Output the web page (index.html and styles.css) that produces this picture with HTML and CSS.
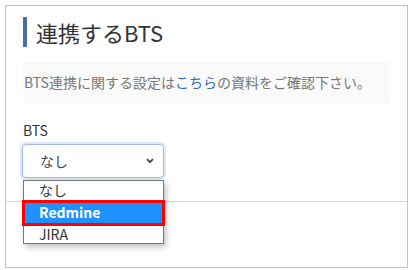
FILE: index.html
```html
<!DOCTYPE html>
<html lang="ja">
<head>
  <meta charset="UTF-8" />
  <meta name="viewport" content="width=device-width, initial-scale=1" />
  <title>連携するBTS</title>
  <link rel="stylesheet" href="styles.css">
</head>
<body>

  <div class="card">
    <div class="card-body">
      <h2 class="heading">連携するBTS</h2>

      <div class="info">BTS連携に関する設定は<a href="#">こちら</a>の資料をご確認下さい。</div>

      <label class="field-label" for="bts">BTS</label>
      <div class="select" id="bts">
        <span>なし</span>
        <svg class="chevron" width="8" height="6" viewBox="0 0 8 6">
          <path d="M1 1.2 L4 4.2 L7 1.2" fill="none" stroke="#444" stroke-width="1.8" />
        </svg>
      </div>
    </div>

    <!-- ドロップダウン展開中 -->
    <ul class="options">
      <li>なし</li>
      <li class="active">Redmine</li>
      <li>JIRA</li>
    </ul>
  </div>

</body>
</html>
```

FILE: styles.css
```css
body {
  margin: 0;
  background: #fff;
  font-family: "Noto Sans CJK JP", "Noto Sans", sans-serif;
  color: #333;
}

.card {
  position: relative;
  box-sizing: border-box;
  width: 403px;
  height: 263px;
  margin: 5px;
  border: 1px solid #c2c2c2;
}

.card-body {
  box-sizing: border-box;
  height: 196px;
  padding: 11px 17px 0;
  border-bottom: 1px solid #cfd8dc;
}

.heading {
  margin: 0;
  height: 30px;
  padding-left: 9px;
  border-left: 4px solid #4a6db0;
  font-size: 22px;
  font-weight: normal;
  line-height: 30px;
  color: #333;
}

.info {
  margin-top: 15px;
  height: 41px;
  padding-left: 1px;
  background: #fafafa;
  font-size: 14px;
  line-height: 41px;
  color: #777;
  white-space: nowrap;
}
.info a {
  color: #3a6cc0;
  text-decoration: none;
}

.field-label {
  display: block;
  margin-top: 17px;
  font-size: 14px;
  line-height: 20px;
  color: #333;
}

.select {
  box-sizing: border-box;
  display: flex;
  align-items: center;
  justify-content: space-between;
  width: 142px;
  height: 34px;
  margin-top: 4px;
  margin-left: -1px;
  padding: 0 9px 0 17px;
  border: 1px solid #9fbbe6;
  border-radius: 4px;
  box-shadow: 0 0 0 2px #dde7f5;
  font-size: 14px;
  color: #444;
}

/* リスト（開いた状態） */
.options {
  position: absolute;
  left: 17px;
  top: 174px;
  width: 139px;
  margin: 0;
  padding: 0;
  list-style: none;
  background: #fff;
  border: 1px solid #777;
  box-shadow: 2px 3px 6px rgba(0, 0, 0, 0.25);
  font-size: 14px;
  color: #333;
}
.options li {
  position: relative;
  height: 19px;
  padding-left: 15px;
  line-height: 19px;
}
.options li.active {
  height: 25px;
  line-height: 25px;
  background: #1e90ff;
  color: #fff;
  font-weight: bold;
}
.options li:last-child {
  height: 18px;
  line-height: 18px;
}
.options li.active::after {
  content: "";
  position: absolute;
  left: -2px;
  right: -2px;
  top: 0;
  bottom: -1px;
  border: 3px solid #ff0000;
}
```
